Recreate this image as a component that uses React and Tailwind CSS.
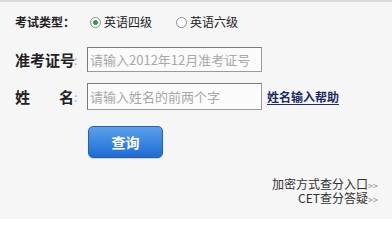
import React from 'react';

const Radio = ({ checked }) => (
    <span className="shrink-0 w-[11px] h-[11px] rounded-full border border-[#8a8a8a] bg-white flex items-center justify-center">
        {checked && <span className="w-[5px] h-[5px] rounded-full bg-[#2f9a4a]" />}
    </span>
);

const App = () => {
    return (
        <div
            className="w-[392px] h-[219px] bg-[#f6f6f6] border-t-2 border-[#dcdcdc] overflow-hidden text-[#222]"
            style={{ fontFamily: '"Noto Sans CJK SC", "Liberation Sans", sans-serif' }}
        >
            {/* exam type */}
            <div className="flex items-center h-[20px] mt-[10px] pl-[15px] whitespace-nowrap">
                <span className="shrink-0 w-[75px] text-[12px] font-bold leading-none">考试类型：</span>
                <Radio checked />
                <span className="ml-[3px] text-[12px] leading-none">英语四级</span>
                <span className="ml-[24px]" />
                <Radio />
                <span className="ml-[3px] text-[12px] leading-none">英语六级</span>
            </div>

            {/* ticket number */}
            <div className="flex items-center h-[25px] mt-[15px] pl-[15px] whitespace-nowrap">
                <span className="shrink-0 w-[59px] text-[15px] font-bold leading-none">准考证号</span>
                <span className="shrink-0 w-[13px] text-[12px] text-[#aaa] leading-none">:</span>
                <div className="shrink-0 w-[175px] h-[25px] border border-[#9a9a9a] border-t-[#7a7a7a] border-l-[#7a7a7a] bg-[#fbfbfb] flex items-center pl-[2px]">
                    <span className="text-[13px] text-[#a8a8a8] leading-none">请输入2012年12月准考证号</span>
                </div>
            </div>

            {/* name */}
            <div className="flex items-center h-[27px] mt-[11px] pl-[15px] whitespace-nowrap">
                <span className="shrink-0 w-[59px] flex justify-between text-[15px] font-bold leading-none">
                    <span>姓</span>
                    <span>名</span>
                </span>
                <span className="shrink-0 w-[13px] text-[12px] text-[#aaa] leading-none">:</span>
                <div className="shrink-0 w-[175px] h-[27px] border border-[#9a9a9a] border-t-[#7a7a7a] border-l-[#7a7a7a] bg-[#fbfbfb] flex items-center pl-[2px]">
                    <span className="text-[13px] text-[#a8a8a8] leading-none">请输入姓名的前两个字</span>
                </div>
                <a href="#" className="ml-[5px] text-[12px] font-bold text-[#1c2a66] underline underline-offset-2 leading-none">
                    姓名输入帮助
                </a>
            </div>

            {/* submit */}
            <div className="pl-[88px] mt-[16px]">
                <button className="w-[75px] h-[32px] rounded-[5px] border border-[#2b5fae] bg-gradient-to-b from-[#5aa0ea] to-[#1d6bd6] text-white text-[14px] font-bold shadow-[0_1px_1px_rgba(0,0,0,0.15)]">
                    查询
                </button>
            </div>

            {/* links */}
            <div className="mt-[20px] pr-[14px] flex flex-col items-end text-[12px] leading-[12px] text-[#333] whitespace-nowrap">
                <a href="#" className="leading-[12px]">加密方式查分入口<span className="text-[#888] text-[9px] leading-[12px]">&gt;&gt;</span></a>
                <a href="#" className="leading-[12px]">CET查分答疑<span className="text-[#888] text-[9px] leading-[12px]">&gt;&gt;</span></a>
            </div>
        </div>
    );
};

export default App;
